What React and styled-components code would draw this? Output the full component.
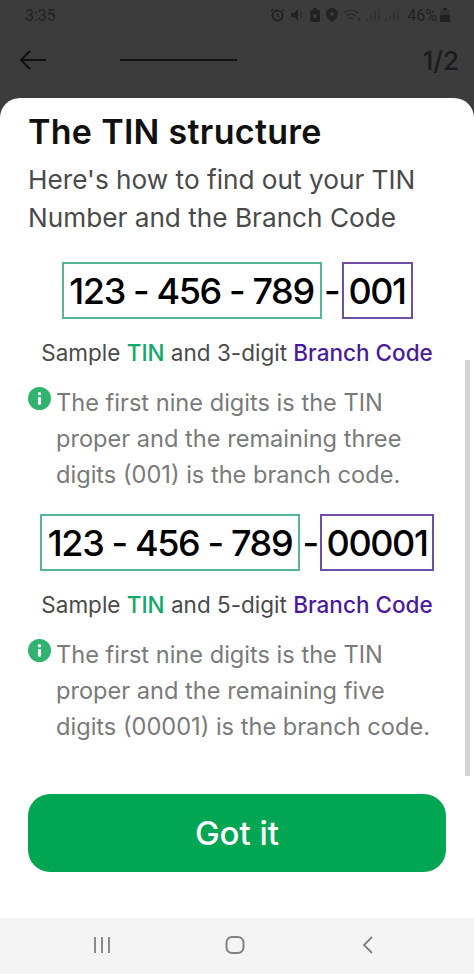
import React from 'react';
import styled, { createGlobalStyle } from 'styled-components';

const GlobalStyle = createGlobalStyle`
  html, body {
    margin: 0;
    padding: 0;
    background: #3c3c3c;
  }
  * {
    box-sizing: border-box;
  }
`;

const Screen = styled.div`
  width: 474px;
  height: 974px;
  display: flex;
  flex-direction: column;
  overflow: hidden;
  font-family: 'Inter', 'Liberation Sans', sans-serif;
  background: #3c3c3c;
`;

const StatusBar = styled.div`
  height: 30px;
  padding: 0 24px 0 25px;
  display: flex;
  align-items: center;
  justify-content: space-between;
  color: #222;
  font-size: 16px;
  font-family: 'Roboto', sans-serif;
`;

const StatusIcons = styled.div`
  display: flex;
  align-items: center;
  gap: 5px;
`;

const Percent = styled.span`
  margin-left: 3px;
  margin-right: -2px;
`;

const Header = styled.div`
  height: 68px;
  padding: 0 15px 8px 20px;
  display: flex;
  align-items: center;
  color: #111;
`;

const Progress = styled.div`
  width: 117px;
  height: 2px;
  background: #111;
  margin-left: 74px;
`;

const Step = styled.div`
  margin-left: auto;
  font-size: 26px;
  font-weight: 500;
  color: #1c1c1c;
`;

const Sheet = styled.div`
  position: relative;
  flex: 1;
  background: #fff;
  border-radius: 20px 20px 0 0;
  padding: 14px 28px 46px;
  display: flex;
  flex-direction: column;
`;

const Title = styled.h1`
  margin: 0;
  font-size: 34px;
  line-height: 40px;
  font-weight: 600;
  letter-spacing: 0.3px;
  color: #111;
`;

const Subtitle = styled.p`
  margin: 9px 0 0;
  font-size: 26.2px;
  line-height: 38px;
  white-space: nowrap;
  color: #4a4a4a;
`;

const TinRow = styled.div`
  display: flex;
  justify-content: center;
  align-items: center;
  margin-top: ${(p) => p.$top}px;
  color: #000;
  font-size: 36px;
  font-weight: 500;
  letter-spacing: -1.4px;
`;

const CodeBox = styled.div`
  height: 57px;
  width: ${(p) => p.$width}px;
  border: 2px solid ${(p) => p.$color};
  display: flex;
  align-items: center;
  justify-content: center;
  white-space: pre;
`;

const Dash = styled.span`
  width: 20px;
  text-align: center;
`;

const Caption = styled.p`
  margin: 18px 0 0;
  text-align: center;
  font-size: 22.5px;
  line-height: 32px;
  white-space: nowrap;
  color: #4a4a4a;
`;

const Accent = styled.span`
  color: ${(p) => p.$color};
  font-weight: 500;
`;

const Note = styled.div`
  margin-top: 16px;
  display: flex;
  align-items: flex-start;
  gap: 5px;
`;

const NoteIcon = styled.svg`
  width: 23px;
  height: 23px;
  flex: none;
  margin-top: 2px;
`;

const NoteText = styled.p`
  margin: 0;
  font-size: 23.6px;
  line-height: 36px;
  white-space: nowrap;
  color: #7a7a7a;
`;

const Button = styled.button`
  margin-top: auto;
  height: 78px;
  flex: none;
  border: none;
  border-radius: 22px;
  background: #00a651;
  color: #fff;
  font-family: inherit;
  font-size: 33px;
  font-weight: 500;
`;

const ScrollThumb = styled.div`
  position: absolute;
  right: 4px;
  top: 262px;
  width: 5px;
  height: 416px;
  background: #d4d4d4;
`;

const NavBar = styled.div`
  height: 56px;
  background: #f4f4f4;
  display: grid;
  grid-template-columns: repeat(3, 133px);
  justify-items: center;
  align-items: center;
  padding: 0 0 2px 35px;
`;

const InfoIcon = () => (
  <NoteIcon viewBox="0 0 24 24">
    <circle cx="12" cy="12" r="12" fill="#2fb36f" />
    <circle cx="12" cy="7" r="1.8" fill="#fff" />
    <rect x="10.4" y="10.5" width="3.2" height="8" rx="1" fill="#fff" />
  </NoteIcon>
);

function Sample({ top, digits, greenWidth, purpleWidth, text }) {
  return (
    <>
      <TinRow $top={top}>
        <CodeBox $color="#55b598" $width={greenWidth}>123 - 456 - 789</CodeBox>
        <Dash>-</Dash>
        <CodeBox $color="#6f4fa5" $width={purpleWidth}>{digits}</CodeBox>
      </TinRow>
      <Caption>
        Sample <Accent $color="#12a86b">TIN</Accent> and {digits.length}-digit{' '}
        <Accent $color="#4b1a9a">Branch Code</Accent>
      </Caption>
      <Note>
        <InfoIcon />
        <NoteText>{text}</NoteText>
      </Note>
    </>
  );
}

export default function App() {
  return (
    <Screen>
      <GlobalStyle />
      <StatusBar>
        <span>3:35</span>
        <StatusIcons>
          <svg width="15" height="14" viewBox="0 0 15 14">
            <circle cx="7.5" cy="7.5" r="5" fill="none" stroke="#222" strokeWidth="2" />
            <path d="M7.500 5v3l2 1" stroke="#222" strokeWidth="1.2" fill="none" />
            <path d="M1 3l2-2M14 3l-2-2" stroke="#222" strokeWidth="1.5" />
          </svg>
          <svg width="14" height="14" viewBox="0 0 14 14">
            <path d="M1 5h3l4-4v12l-4-4H1z" fill="#222" />
            <path d="M10 3l2 2-2 2 2 2-2 2" stroke="#222" fill="none" />
          </svg>
          <svg width="12" height="14" viewBox="0 0 12 14">
            <rect x="1" y="2" width="10" height="12" rx="2" fill="#222" />
            <rect x="4" y="0" width="4" height="2" fill="#222" />
            <circle cx="6" cy="8" r="2" fill="#3c3c3c" />
          </svg>
          <svg width="12" height="14" viewBox="0 0 12 14">
            <path d="M6 0a6 6 0 0 1 6 6c0 3-3 6-6 8-3-2-6-5-6-8a6 6 0 0 1 6-6z" fill="#222" />
            <circle cx="6" cy="6" r="2" fill="#3c3c3c" />
          </svg>
          <svg width="18" height="14" viewBox="0 0 18 14">
            <path d="M1 5a10 10 0 0 1 14 0M3.500 8a6.500 6.500 0 0 1 9 0M6 11a3 3 0 0 1 4 0" stroke="#2a2a2a" strokeWidth="1.3" fill="none" />
            <path d="M16 9v4" stroke="#2a2a2a" strokeWidth="1.300" />
          </svg>
          <svg width="14" height="12" viewBox="0 0 14 12">
            <path d="M1 12V9M5 12V6M9 12V2M13 12V0" stroke="#2e2e2e" strokeWidth="1.3" />
          </svg>
          <svg width="14" height="12" viewBox="0 0 14 12">
            <path d="M1 12V9M5 12V6M9 12V2M13 12V0" stroke="#2e2e2e" strokeWidth="1.3" />
          </svg>
          <Percent>46%</Percent>
          <svg width="10" height="14" viewBox="0 0 10 14">
            <rect x="3" y="0" width="4" height="2" fill="#222" />
            <rect x="0" y="2" width="10" height="12" rx="1" fill="#333" />
            <rect x="0" y="7" width="10" height="7" rx="1" fill="#222" />
          </svg>
        </StatusIcons>
      </StatusBar>
      <Header>
        <svg width="26" height="20" viewBox="0 0 26 20" fill="none" stroke="#111" strokeWidth="2">
          <path d="M26 10H1M10 1L1 10l9 9" />
        </svg>
        <Progress />
        <Step>1/2</Step>
      </Header>
      <Sheet>
        <Title>The TIN structure</Title>
        <Subtitle>
          Here's how to find out your TIN
          <br />
          Number and the Branch Code
        </Subtitle>
        <Sample
          top={25}
          digits="001"
          greenWidth={260}
          purpleWidth={71}
          text={<>The first nine digits is the TIN<br />proper and the remaining three<br />digits (001) is the branch code.</>}
        />
        <Sample
          top={21}
          digits="00001"
          greenWidth={260}
          purpleWidth={114}
          text={<>The first nine digits is the TIN<br />proper and the remaining five<br />digits (00001) is the branch code.</>}
        />
        <ScrollThumb />
        <Button>Got it</Button>
      </Sheet>
      <NavBar>
        <svg width="18" height="18" viewBox="0 0 18 18" stroke="#808080" strokeWidth="1.8">
          <path d="M2 1v16M9 1v16M16 1v16" />
        </svg>
        <svg width="20" height="20" viewBox="0 0 20 20" fill="none" stroke="#808080" strokeWidth="2">
          <rect x="1.500" y="2" width="17" height="16" rx="5.500" />
        </svg>
        <svg width="14" height="20" viewBox="0 0 14 20" fill="none" stroke="#808080" strokeWidth="1.800">
          <path d="M11 2L3 10l8 8" />
        </svg>
      </NavBar>
    </Screen>
  );
}
